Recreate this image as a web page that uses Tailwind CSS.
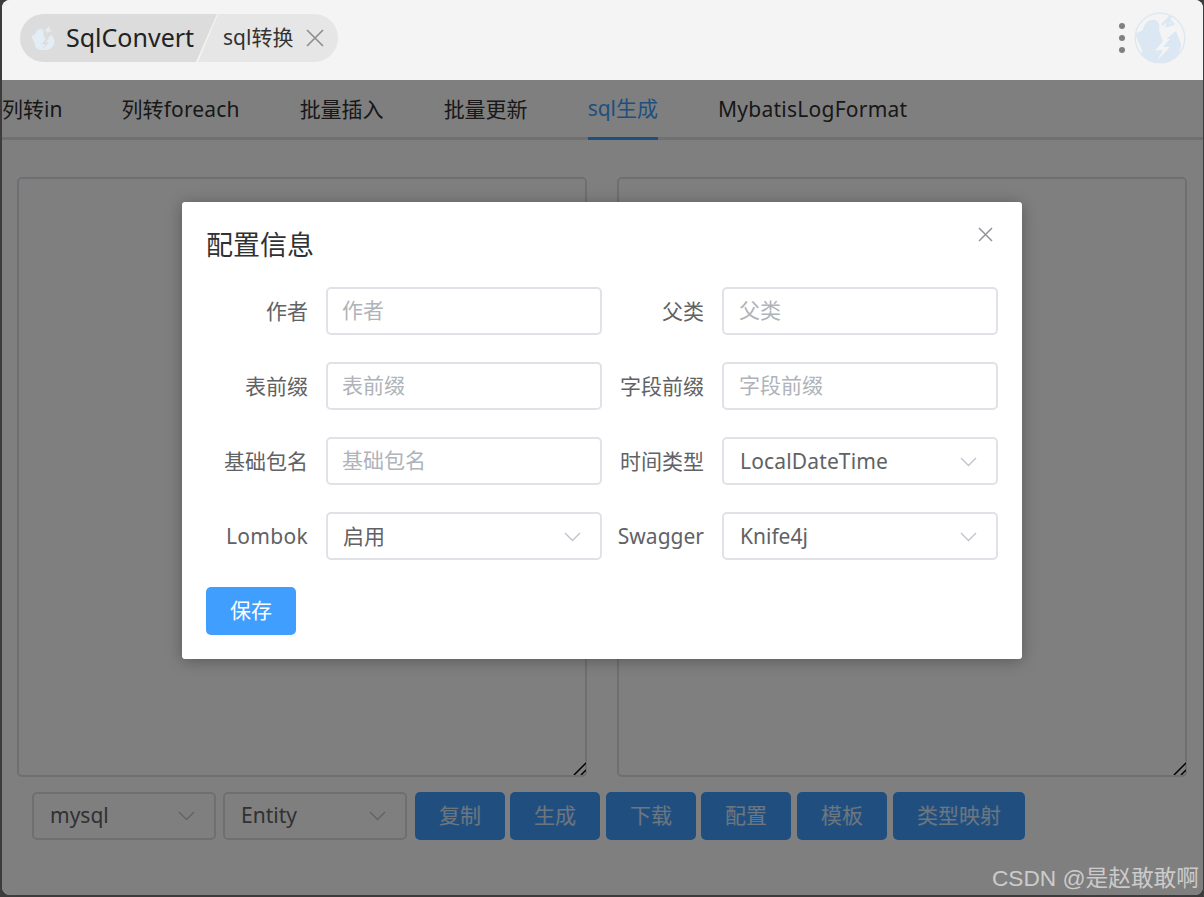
<!DOCTYPE html>
<html lang="en">
<head>
    <meta charset="UTF-8">
    <title>SqlConvert</title>
    <script src="https://cdn.jsdelivr.net/npm/@tailwindcss/browser@4"></script>
</head>
<body class="bg-[#3c3c3c] h-[897px] overflow-hidden font-['Noto_Sans','Noto_Sans_CJK_SC',sans-serif]">
    <div class="relative ml-[2px] mr-[1px] h-[895px] bg-white rounded-lg overflow-hidden flex flex-col">
        <!-- title bar -->
        <div class="h-[80px] shrink-0 bg-[#f4f4f4] flex items-center pb-[4px] pl-[18px] pr-[17px]">
            <div class="flex items-center h-[48px]">
                <div class="h-full w-[197px] bg-[#dcdcdc] rounded-l-[24px] flex items-center pl-[11px] [clip-path:polygon(0_0,100%_0,176px_100%,0_100%)]">
                    <svg class="w-[26px] h-[26px]" viewBox="0 0 52 52">
                        <path d="M1 22l8-4c1-7 6-11 12-10 4 1 5 6 4 10l4 12 13-11 5 13c0 9-6 16-15 18H19C11 48 7 44 8 38z" fill="#e2edf6"/>
                        <path d="M31 27L21 38.500l8-.5-6 10.500L36 35h-7l7-8z" fill="#dcdcdc"/>
                        <path d="M28 13l9-9M33 14l6-2-4-5z" fill="none" stroke="#e2edf6" stroke-width="2.500"/>
                    </svg>
                    <span class="ml-[9px] text-[25px] text-[#222]">SqlConvert</span>
                </div>
                <div class="h-full w-[140px] ml-[-19px] bg-[#e6e6e6] rounded-r-[24px] flex items-center pl-[25px] [clip-path:polygon(20px_0,100%_0,100%_100%,0_100%)]">
                    <span class="text-[21px] text-[#333]">sql转换</span>
                    <svg class="ml-[13px] w-[18px] h-[18px]" viewBox="0 0 18 18" fill="none" stroke="#8c8c8c" stroke-width="1.6">
                        <path d="M1 1l16 16M17 1L1 17"/>
                    </svg>
                </div>
            </div>
            <div class="ml-auto flex items-center gap-[9px]">
                <div class="flex flex-col gap-[6px]">
                    <span class="block w-[6px] h-[6px] rounded-full bg-[#808080]"></span>
                    <span class="block w-[6px] h-[6px] rounded-full bg-[#808080]"></span>
                    <span class="block w-[6px] h-[6px] rounded-full bg-[#808080]"></span>
                </div>
                <svg class="w-[52px] h-[52px]" viewBox="0 0 52 52">
                    <circle cx="26" cy="26" r="24.800" fill="#f4f4f4" stroke="#dbe7f2" stroke-width="1.300"/>
                    <path d="M1 22l8-4c1-7 6-11 12-10 4 1 5 6 4 10l4 12 13-11 5 13c0 9-6 16-15 18H19C11 48 7 44 8 38z" fill="#dbe7f2"/>
                    <path d="M31 27L21 38.500l8-.5-6 10.500L36 35h-7l7-8z" fill="#f4f4f4"/>
                    <path d="M28 13l9-9M33 14l6-2-4-5z" fill="none" stroke="#dbe7f2" stroke-width="2.500"/>
                </svg>
            </div>
        </div>

        <!-- tabs -->
        <div class="h-[60px] shrink-0 border-b-[3px] border-[#e0e0e4] flex gap-[60px] text-[21px] text-[#303133]">
            <div class="h-[60px] flex items-center">列转in</div>
            <div class="h-[60px] flex items-center tracking-[0.15px] -ml-px">列转foreach</div>
            <div class="h-[60px] flex items-center">批量插入</div>
            <div class="h-[60px] flex items-center">批量更新</div>
            <div class="h-[60px] flex items-center text-[#409eff] border-b-[3px] border-[#409eff]">sql生成</div>
            <div class="h-[60px] flex items-center tracking-[0.25px]">MybatisLogFormat</div>
        </div>

        <!-- editors -->
        <div class="flex gap-[30px] pl-[15px] pr-[16px] pt-[37px]">
            <div class="relative w-[570px] h-[600px]">
                <textarea class="block w-full h-full border-2 border-[#dcdfe6] rounded-[5px] resize-none"></textarea>
                <svg class="absolute right-[1px] bottom-[2px] w-[13px] h-[13px]" viewBox="0 0 13 13" fill="none" stroke="#000" stroke-width="1.500"><path d="M1 13L13 1M8 13l5-5"/></svg>
            </div>
            <div class="relative w-[570px] h-[600px]">
                <textarea class="block w-full h-full border-2 border-[#dcdfe6] rounded-[5px] resize-none"></textarea>
                <svg class="absolute right-[1px] bottom-[2px] w-[13px] h-[13px]" viewBox="0 0 13 13" fill="none" stroke="#000" stroke-width="1.500"><path d="M1 13L13 1M8 13l5-5"/></svg>
            </div>
        </div>

        <!-- toolbar -->
        <div class="flex items-center pl-[30px] pt-[15px] text-[21px]">
            <div class="w-[184px] h-[48px] border-2 border-[#dcdfe6] rounded-[5px] flex items-center justify-between pl-[16px] pr-[19px] text-[#606266]">
                <span>mysql</span>
                <svg class="w-[17px] h-[10px]" viewBox="0 0 17 10" fill="none" stroke="#c0c4cc" stroke-width="1.4"><path d="M1 1l7.500 7.500L16 1"/></svg>
            </div>
            <div class="ml-[7px] w-[184px] h-[48px] border-2 border-[#dcdfe6] rounded-[5px] flex items-center justify-between pl-[16px] pr-[19px] text-[#606266]">
                <span>Entity</span>
                <svg class="w-[17px] h-[10px]" viewBox="0 0 17 10" fill="none" stroke="#c0c4cc" stroke-width="1.4"><path d="M1 1l7.500 7.500L16 1"/></svg>
            </div>
            <button class="ml-[8px] w-[90px] h-[48px] bg-[#409eff] text-white/80 rounded-[5px]">复制</button>
            <button class="ml-[5px] w-[90px] h-[48px] bg-[#409eff] text-white/80 rounded-[5px]">生成</button>
            <button class="ml-[6px] w-[90px] h-[48px] bg-[#409eff] text-white/80 rounded-[5px]">下载</button>
            <button class="ml-[5px] w-[90px] h-[48px] bg-[#409eff] text-white/80 rounded-[5px]">配置</button>
            <button class="ml-[6px] w-[90px] h-[48px] bg-[#409eff] text-white/80 rounded-[5px]">模板</button>
            <button class="ml-[6px] w-[132px] h-[48px] bg-[#409eff] text-white/80 rounded-[5px]">类型映射</button>
        </div>

        <!-- overlay and dialog -->
        <div class="absolute inset-x-0 top-[80px] bottom-0 bg-black/50">
            <div class="absolute left-[180px] top-[122px] w-[840px] h-[457px] bg-white rounded-[3px] shadow-[0_2px_16px_rgba(0,0,0,0.3)] px-[24px] pt-[24px]">
                <div class="flex justify-between">
                    <h2 class="text-[27px] leading-[38px] text-[#303133]">配置信息</h2>
                    <svg class="mt-[1px] mr-[5px] w-[15px] h-[15px]" viewBox="0 0 15 15" fill="none" stroke="#909399" stroke-width="1.500"><path d="M1 1l13 13M14 1L1 14"/></svg>
                </div>
                <div class="mt-[23px] grid grid-cols-[396px_378px] gap-x-[18px] gap-y-[27px] text-[21px] text-[#606266]">
                    <div class="flex items-center">
                        <label class="w-[102px] mr-[18px] pt-[2px] text-right">作者</label>
                        <input class="w-[276px] h-[48px] border-2 border-[#e0e2e8] rounded-[5px] px-[14px] pb-[2px] placeholder:text-[#b0b3b9]" placeholder="作者">
                    </div>
                    <div class="flex items-center">
                        <label class="w-[84px] mr-[18px] pt-[2px] flex justify-end whitespace-nowrap">父类</label>
                        <input class="w-[276px] h-[48px] border-2 border-[#e0e2e8] rounded-[5px] px-[15px] pb-[2px] placeholder:text-[#b0b3b9]" placeholder="父类">
                    </div>
                    <div class="flex items-center">
                        <label class="w-[102px] mr-[18px] pt-[1px] text-right">表前缀</label>
                        <input class="w-[276px] h-[48px] border-2 border-[#e0e2e8] rounded-[5px] px-[14px] pb-[2px] placeholder:text-[#b0b3b9]" placeholder="表前缀">
                    </div>
                    <div class="flex items-center">
                        <label class="w-[84px] mr-[18px] pt-[1px] flex justify-end whitespace-nowrap">字段前缀</label>
                        <input class="w-[276px] h-[48px] border-2 border-[#e0e2e8] rounded-[5px] px-[15px] pb-[2px] placeholder:text-[#b0b3b9]" placeholder="字段前缀">
                    </div>
                    <div class="flex items-center">
                        <label class="w-[102px] mr-[18px] pt-[2px] text-right">基础包名</label>
                        <input class="w-[276px] h-[48px] border-2 border-[#e0e2e8] rounded-[5px] px-[14px] pb-[2px] placeholder:text-[#b0b3b9]" placeholder="基础包名">
                    </div>
                    <div class="flex items-center">
                        <label class="w-[84px] mr-[18px] pt-[2px] flex justify-end whitespace-nowrap">时间类型</label>
                        <div class="w-[276px] h-[48px] border-2 border-[#e0e2e8] rounded-[5px] flex items-center justify-between pl-[16px] pr-[19px] pt-[1px]">
                            <span class="tracking-[0.15px]">LocalDateTime</span>
                            <svg class="w-[17px] h-[10px]" viewBox="0 0 17 10" fill="none" stroke="#c0c4cc" stroke-width="1.4"><path d="M1 1l7.500 7.500L16 1"/></svg>
                        </div>
                    </div>
                    <div class="flex items-center">
                        <label class="w-[102px] mr-[18px] pt-[2px] tracking-[0.3px] text-right">Lombok</label>
                        <div class="w-[276px] h-[48px] border-2 border-[#e0e2e8] rounded-[5px] flex items-center justify-between pl-[15px] pr-[19px] pt-[1px]">
                            <span>启用</span>
                            <svg class="w-[17px] h-[10px]" viewBox="0 0 17 10" fill="none" stroke="#c0c4cc" stroke-width="1.4"><path d="M1 1l7.500 7.500L16 1"/></svg>
                        </div>
                    </div>
                    <div class="flex items-center">
                        <label class="w-[84px] mr-[18px] pt-[2px] flex justify-end whitespace-nowrap">Swagger</label>
                        <div class="w-[276px] h-[48px] border-2 border-[#e0e2e8] rounded-[5px] flex items-center justify-between pl-[16px] pr-[19px] pt-[1px]">
                            <span>Knife4j</span>
                            <svg class="w-[17px] h-[10px]" viewBox="0 0 17 10" fill="none" stroke="#c0c4cc" stroke-width="1.4"><path d="M1 1l7.500 7.500L16 1"/></svg>
                        </div>
                    </div>
                </div>
                <button class="mt-[27px] w-[90px] h-[48px] bg-[#409eff] text-white text-[21px] rounded-[5px]">保存</button>
            </div>
        </div>

        <!-- watermark -->
        <div class="absolute right-[4px] bottom-[1px] text-[22.700px] leading-[32px] text-white/60 font-['Liberation_Sans','Noto_Sans_CJK_SC',sans-serif]">CSDN @是赵敢敢啊</div>
    </div>
</body>
</html>
